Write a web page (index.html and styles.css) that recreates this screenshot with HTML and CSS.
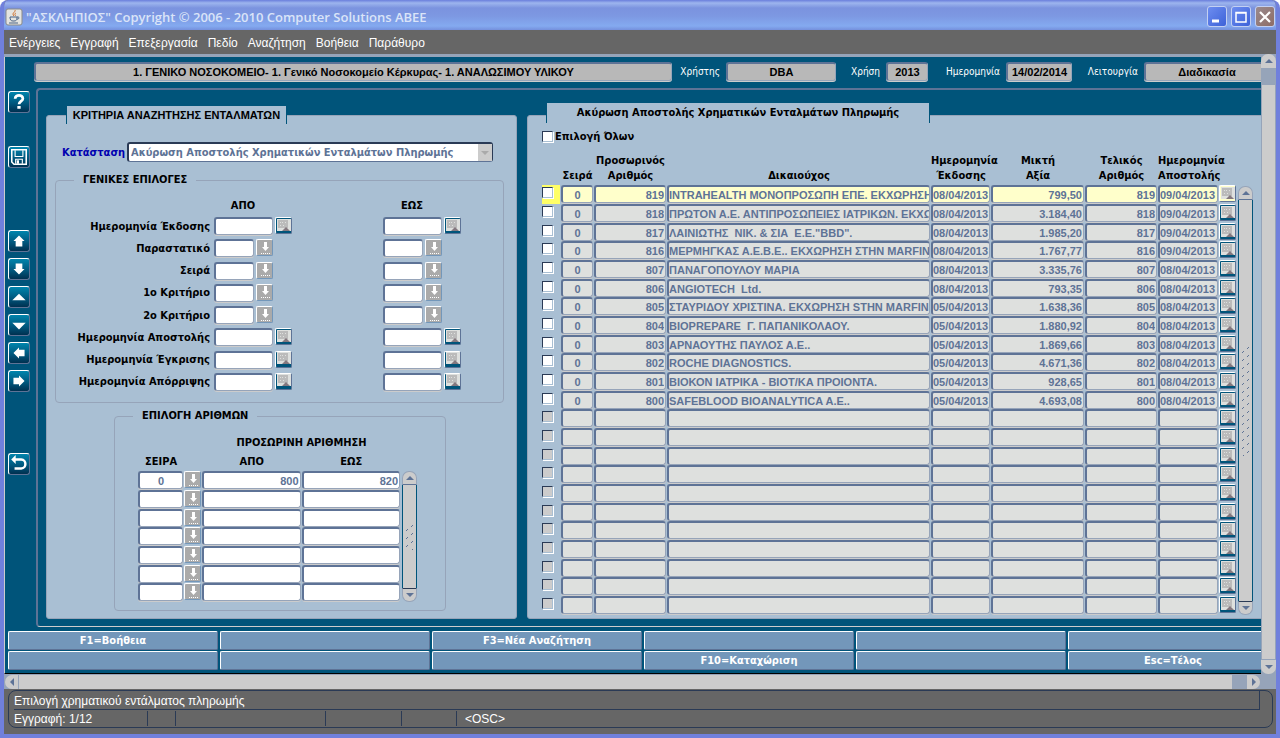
FILE: index.html
```html
<!DOCTYPE html>
<html lang="el">
<head>
  <meta charset="utf-8">
  <title>"ΑΣΚΛΗΠΙΟΣ" Copyright © 2006 - 2010 Computer Solutions ABEE</title>
  <link rel="stylesheet" href="styles.css">
</head>
<body>
  <!-- shared icons -->
  <svg class="defs" aria-hidden="true">
    <symbol id="i-cal" viewBox="0 0 14 14">
      <rect width="14" height="12" fill="#dee0de"/>
      <path d="M1 1h10v8H1z" fill="#bbb"/>
      <path d="M3 3.500h1M5 3.500h1M8 3.500h1M3 6.500h1M6 6.500h1" stroke="#dee0de"/>
      <path d="M5 12l4-4 4 4z" fill="#84787f"/>
    </symbol>
    <symbol id="i-lov" viewBox="0 0 14 14">
      <path d="M6 1h3v5h2L7.500 10 4 6h2z" fill="#fff"/>
      <path d="M3 12.500h9" stroke="#fff" stroke-dasharray="1 1"/>
    </symbol>
    <symbol id="i-up" viewBox="0 0 8 4"><path d="M4 0l4 4H0z" fill="#5e7396"/></symbol>
    <symbol id="i-down" viewBox="0 0 8 4"><path d="M0 0h8L4 4z" fill="#5e7396"/></symbol>
    <pattern id="ticks" width="10" height="8" patternUnits="userSpaceOnUse">
      <path d="M1 7l2-2M6 3l2-2" stroke="#5e7396"/>
    </pattern>
  </svg>

  <header class="titlebar">
    <svg class="java" viewBox="0 0 16 16">
      <rect x="0" y="0" width="16" height="16" rx="2" fill="#e4e4e0" stroke="#8b8b88"/>
      <path d="M9 1c1 2-4 3-1 6M10 4c-2 1-1 2 0 3" stroke="#d0702c" fill="none"/>
      <path d="M4 8h7v1c0 2-1 3-3 3H7c-2 0-3-1-3-4zM11 8c3-1 2 3 0 2M3 14h9" stroke="#4a6384" fill="none"/>
    </svg>
    <h1>"ΑΣΚΛΗΠΙΟΣ" Copyright © 2006 - 2010 Computer Solutions ABEE</h1>
    <button class="win" aria-label="Minimize"><svg viewBox="0 0 18 18"><path d="M4 13h7" stroke="#fff" stroke-width="3"/></svg></button>
    <button class="win" aria-label="Maximize"><svg viewBox="0 0 18 18"><path d="M4 4.500h10V14H4zM4 5h10" stroke="#fff" stroke-width="1.500" fill="none"/></svg></button>
    <button class="win close" aria-label="Close"><svg viewBox="0 0 18 18"><path d="M4 4l10 10M14 4L4 14" stroke="#fff" stroke-width="2.200"/></svg></button>
  </header>

  <nav class="menubar">
    <a href="#">Ενέργειες</a>
    <a href="#">Εγγραφή</a>
    <a href="#">Επεξεργασία</a>
    <a href="#">Πεδίο</a>
    <a href="#">Αναζήτηση</a>
    <a href="#">Βοήθεια</a>
    <a href="#">Παράθυρο</a>
  </nav>

  <div class="viewport">
    <main class="workspace">
      <div class="canvas">
        <div class="infobar">
          <input class="field grow" aria-label="Μονάδα" readonly value="1. ΓΕΝΙΚΟ ΝΟΣΟΚΟΜΕΙΟ- 1. Γενικό Νοσοκομείο Κέρκυρας- 1. ΑΝΑΛΩΣΙΜΟΥ ΥΛΙΚΟΥ">
          <label class="l-user" for="user">Χρήστης</label>
          <input class="field w-user" id="user" readonly value="DBA">
          <label class="l-year" for="year">Χρήση</label>
          <input class="field w-year" id="year" readonly value="2013">
          <label class="l-date" for="date">Ημερομηνία</label>
          <input class="field w-date" id="date" readonly value="14/02/2014">
          <label class="l-mode" for="mode">Λειτουργία</label>
          <input class="field w-mode" id="mode" readonly value="Διαδικασία">
        </div>

        <div class="work">
          <div class="toolbar">
            <button aria-label="Βοήθεια"><svg viewBox="0 0 18 18"><path d="M5.500 6c0-4 7-4 7 0 0 2-3.500 2.500-3.500 5" stroke="#fff" stroke-width="2.400" fill="none"/><path d="M7.500 12.500h3v2.500h-3z" fill="#fff"/></svg></button>
            <button class="save" aria-label="Αποθήκευση"><svg viewBox="0 0 18 18"><path d="M2.500 2.500h13v13h-11l-2-2z" stroke="#fff" fill="none" stroke-width="1.400"/><path d="M5.500 3v5.500h7V3M6 15v-4h6v4" stroke="#fff" fill="none"/><path d="M7 12h2v3H7z" fill="#fff"/></svg></button>
            <button class="first" aria-label="Προηγούμενη εγγραφή"><svg viewBox="0 0 18 18"><path d="M9 4l5 5h-2v5H6V9H4z" fill="#fff"/></svg></button>
            <button aria-label="Επόμενη εγγραφή"><svg viewBox="0 0 18 18"><path d="M9 14l5-5h-2V4H6v5H4z" fill="#fff"/></svg></button>
            <button aria-label="Προηγούμενη σελίδα"><svg viewBox="0 0 18 18"><path d="M9 6l6 6H3z" fill="#fff"/></svg></button>
            <button aria-label="Επόμενη σελίδα"><svg viewBox="0 0 18 18"><path d="M9 13L3 7h12z" fill="#fff"/></svg></button>
            <button aria-label="Αριστερά"><svg viewBox="0 0 18 18"><path d="M4 9l5-5v2h5v6H9v2z" fill="#fff"/></svg></button>
            <button aria-label="Δεξιά"><svg viewBox="0 0 18 18"><path d="M14 9L9 4v2H4v6h5v2z" fill="#fff"/></svg></button>
            <button class="exit" aria-label="Έξοδος"><svg viewBox="0 0 18 18"><path d="M5 5h6c5 0 5 8 0 8H5" stroke="#fff" stroke-width="2.200" fill="none"/><path d="M2 5l4-4v8z" fill="#fff"/></svg></button>
          </div>

          <div class="frame">
            <section class="panel criteria">
              <h2 class="tab">ΚΡΙΤΗΡΙΑ ΑΝΑΖΗΤΗΣΗΣ ΕΝΤΑΛΜΑΤΩΝ</h2>
              <div class="status-row">
                <label for="status">Κατάσταση</label>
                <div class="select">
                  <select id="status" disabled>
                    <option>Ακύρωση Αποστολής Χρηματικών Ενταλμάτων Πληρωμής</option>
                  </select>
                  <span class="arrow"><svg viewBox="0 0 8 4"><path d="M0 0h8L4 4z" fill="#aaa"/></svg></span>
                </div>
              </div>

              <fieldset class="general">
                <legend>ΓΕΝΙΚΕΣ ΕΠΙΛΟΓΕΣ</legend>
                <div class="range-head"><b>ΑΠΟ</b><b>ΕΩΣ</b></div>
                <div class="ranges" id="ranges"></div>
              </fieldset>

              <fieldset class="numbers">
                <legend>ΕΠΙΛΟΓΗ ΑΡΙΘΜΩΝ</legend>
                <div class="with-scroll">
                  <table class="grid">
                    <colgroup><col class="n-ser"><col class="n-btn"><col class="n-num"><col class="n-num"></colgroup>
                    <thead>
                      <tr class="top"><th></th><th></th><th colspan="2">ΠΡΟΣΩΡΙΝΗ ΑΡΙΘΜΗΣΗ</th></tr>
                      <tr><th>ΣΕΙΡΑ</th><th></th><th>ΑΠΟ</th><th>ΕΩΣ</th></tr>
                    </thead>
                    <tbody id="numbers"></tbody>
                  </table>
                  <div class="vscroll">
                    <button aria-label="Πάνω"><svg><use href="#i-up"/></svg></button>
                    <span class="thumb"><svg class="ticks"><rect width="100%" height="100%" fill="url(#ticks)"/></svg></span>
                    <button class="end" aria-label="Κάτω"><svg><use href="#i-down"/></svg></button>
                  </div>
                </div>
              </fieldset>
            </section>

            <section class="panel results">
              <h2 class="tab">Ακύρωση Αποστολής Χρηματικών Ενταλμάτων Πληρωμής</h2>
              <label class="all"><input type="checkbox">Επιλογή Όλων</label>
              <div class="with-scroll">
                <table class="grid">
                  <colgroup><col class="c-chk"><col class="c-ser"><col class="c-num"><col><col class="c-date"><col class="c-amt"><col class="c-num"><col class="c-sent"><col class="c-btn"></colgroup>
                  <thead>
                    <tr>
                      <th></th><th>Σειρά</th><th>Προσωρινός<br>Αριθμός</th><th>Δικαιούχος</th>
                      <th>Ημερομηνία<br>Έκδοσης</th><th>Μικτή<br>Αξία</th><th>Τελικός<br>Αριθμός</th><th>Ημερομηνία<br>Αποστολής</th><th></th>
                    </tr>
                  </thead>
                  <tbody id="orders"></tbody>
                </table>
                <div class="vscroll">
                  <button aria-label="Πάνω"><svg><use href="#i-up"/></svg></button>
                  <span class="thumb"><svg class="ticks"><rect width="100%" height="100%" fill="url(#ticks)"/></svg></span>
                  <button class="end" aria-label="Κάτω"><svg><use href="#i-down"/></svg></button>
                </div>
              </div>
            </section>
          </div>
        </div>

        <div class="keys">
          <button>F1=Βοήθεια</button><button></button><button>F3=Νέα Αναζήτηση</button><button></button><button></button><button></button>
          <button></button><button></button><button></button><button>F10=Καταχώριση</button><button></button><button>Esc=Τέλος</button>
        </div>
      </div>
    </main>

    <div class="page-v">
      <button aria-label="Πάνω"><svg><use href="#i-up"/></svg></button>
      <span></span>
      <button class="end" aria-label="Κάτω"><svg><use href="#i-down"/></svg></button>
    </div>
    <div class="page-h">
      <button aria-label="Αριστερά"><svg viewBox="0 0 4 8"><path d="M4 0v8L0 4z" fill="#5e7396"/></svg></button>
      <span></span>
      <button class="end" aria-label="Δεξιά"><svg viewBox="0 0 4 8"><path d="M0 0l4 4-4 4z" fill="#5e7396"/></svg></button>
    </div>
  </div>

  <footer class="console">
    <div class="box">
      <div class="message">Επιλογή χρηματικού εντάλματος πληρωμής</div>
      <div class="cells">
        <span class="s1">Εγγραφή: 1/12</span><span class="s2"></span><span class="s3"></span><span class="s4"></span><span class="s5"></span><span class="osc">&lt;OSC&gt;</span>
      </div>
    </div>
  </footer>

  <script>
    var ranges = [
      ["Ημερομηνία Έκδοσης", "cal"],
      ["Παραστατικό", "lov"],
      ["Σειρά", "lov"],
      ["1ο Κριτήριο", "lov"],
      ["2ο Κριτήριο", "lov"],
      ["Ημερομηνία Αποστολής", "cal"],
      ["Ημερομηνία Έγκρισης", "cal"],
      ["Ημερομηνία Απόρριψης", "cal"]
    ];
    var orders = [
      ["0", "819", "INTRAHEALTH ΜΟΝΟΠΡΟΣΩΠΗ ΕΠΕ. ΕΚΧΩΡΗΣΗ ΣΤΗΝ", "08/04/2013", "799,50", "819", "09/04/2013"],
      ["0", "818", "ΠΡΩΤΟΝ Α.Ε. ΑΝΤΙΠΡΟΣΩΠΕΙΕΣ ΙΑΤΡΙΚΩΝ. ΕΚΧΩΡΗΣΗ", "08/04/2013", "3.184,40", "818", "09/04/2013"],
      ["0", "817", "ΛΑΙΝΙΩΤΗΣ  ΝΙΚ. & ΣΙΑ  Ε.Ε.\"BBD\".", "08/04/2013", "1.985,20", "817", "09/04/2013"],
      ["0", "816", "ΜΕΡΜΗΓΚΑΣ Α.Ε.Β.Ε.. ΕΚΧΩΡΗΣΗ ΣΤΗΝ MARFIN E", "08/04/2013", "1.767,77", "816", "09/04/2013"],
      ["0", "807", "ΠΑΝΑΓΟΠΟΥΛΟΥ ΜΑΡΙΑ", "08/04/2013", "3.335,76", "807", "08/04/2013"],
      ["0", "806", "ANGIOTECH  Ltd.", "08/04/2013", "793,35", "806", "08/04/2013"],
      ["0", "805", "ΣΤΑΥΡΙΔΟΥ ΧΡΙΣΤΙΝΑ. ΕΚΧΩΡΗΣΗ STHN MARFIN E", "05/04/2013", "1.638,36", "805", "08/04/2013"],
      ["0", "804", "BIOPREPARE  Γ. ΠΑΠΑΝΙΚΟΛΑΟΥ.", "05/04/2013", "1.880,92", "804", "08/04/2013"],
      ["0", "803", "ΑΡΝΑΟΥΤΗΣ ΠΑΥΛΟΣ Α.Ε..", "05/04/2013", "1.869,66", "803", "08/04/2013"],
      ["0", "802", "ROCHE DIAGNOSTICS.", "05/04/2013", "4.671,36", "802", "08/04/2013"],
      ["0", "801", "ΒΙΟΚΟΝ ΙΑΤΡΙΚΑ - ΒΙΟΤ/ΚΑ ΠΡΟΙΟΝΤΑ.", "05/04/2013", "928,65", "801", "08/04/2013"],
      ["0", "800", "SAFEBLOOD BIOANALYTICA A.E..", "05/04/2013", "4.693,08", "800", "08/04/2013"]
    ];
    var columns = ["Σειρά", "Προσωρινός Αριθμός", "Δικαιούχος", "Ημερομηνία Έκδοσης", "Μικτή Αξία", "Τελικός Αριθμός", "Ημερομηνία Αποστολής"];
    var aligns = ["center", "right", "left", "left", "right", "right", "left"];

    function iconButton(kind) {
      var name = kind == "cal" ? "Ημερολόγιο" : "Λίστα τιμών";
      return '<button class="pick ' + kind + '" aria-label="' + name + '"><svg><use href="#i-' + kind + '"/></svg></button>';
    }
    function cell(value, align, label) {
      return '<td><input class="field ' + align + '" aria-label="' + label + '" value="' + value.replace(/&/g, "&amp;").replace(/"/g, "&quot;") + '"></td>';
    }

    var html = "";
    for (var i = 0; i < ranges.length; i++) {
      var kind = ranges[i][1];
      html += '<label for="from' + i + '">' + ranges[i][0] + '</label>' +
        '<div class="range"><input class="field ' + kind + '" id="from' + i + '">' + iconButton(kind) + '</div>' +
        '<div class="range"><input class="field ' + kind + '" aria-label="' + ranges[i][0] + ' έως">' + iconButton(kind) + '</div>';
    }
    document.getElementById("ranges").innerHTML = html;

    html = "";
    for (var i = 0; i < 7; i++) {
      html += '<tr>' + cell(i == 0 ? "0" : "", "center", "Σειρά") + '<td>' + iconButton("lov") + '</td>' +
        cell(i == 0 ? "800" : "", "right", "Από") + cell(i == 0 ? "820" : "", "right", "Έως") + '</tr>';
    }
    document.getElementById("numbers").innerHTML = html;

    html = "";
    for (var i = 0; i < 23; i++) {
      var row = orders[i];
      html += '<tr class="' + (i == 0 ? "current" : "") + '"><td class="chk"><input type="checkbox" aria-label="Επιλογή"' + (row ? "" : " disabled") + '></td>';
      for (var j = 0; j < columns.length; j++) {
        html += cell(row ? row[j] : "", aligns[j], columns[j]);
      }
      html += '<td>' + iconButton("cal") + '</td></tr>';
    }
    document.getElementById("orders").innerHTML = html;
  </script>
</body>
</html>
```
FILE: styles.css
```css
* {
  box-sizing: border-box;
}

html {
  background: #fff;
}

body {
  margin: 0;
  min-height: 100vh;
  display: flex;
  flex-direction: column;
  border: 4px solid #7080dc;
  border-top: 0;
  border-radius: 8px 8px 0 0;
  background: #666;
  font-family: "DejaVu Sans Condensed", "Noto Sans", sans-serif;
  font-size: 11px;
  overflow: hidden;
}

button, input, select {
  font: inherit;
  margin: 0;
  padding: 0;
}

button {
  display: flex;
  align-items: center;
  justify-content: center;
}

.defs {
  position: absolute;
  width: 0;
  height: 0;
}

/* title bar and menu */
.titlebar {
  display: flex;
  align-items: center;
  gap: 4px;
  height: 30px;
  margin: 0 -4px;
  padding: 3px 5px 0 6px;
  border-radius: 8px 8px 0 0;
  background: linear-gradient(#6a7edc 0, #9db5ee 3px, #7b93df 8px, #7d98e2 16px, #84aaf0 26px, #7590dc 30px);
}

.titlebar h1 {
  flex: 1;
  margin: 0;
  font: 600 13px "Open Sans", sans-serif;
  color: #dae4f8;
}

.java {
  width: 16px;
  height: 16px;
  overflow: visible;
}

.win {
  width: 20px;
  height: 21px;
  border: 1px solid #c3d0f2;
  border-radius: 3px;
  background: linear-gradient(135deg, #6d8df0, #3d62d8);
}

.win svg {
  width: 18px;
  height: 18px;
}

.close {
  background: linear-gradient(135deg, #9a8a8e, #8e6d66);
}

.menubar {
  display: flex;
  gap: 10px;
  height: 24px;
  padding: 1px 5px 0;
  align-items: center;
  background: #666;
}

.menubar a {
  color: #fff;
  font: 12px "Liberation Sans", sans-serif;
  text-decoration: none;
}

/* scrolled work area */
.viewport {
  flex: 1;
  display: grid;
  grid-template-columns: minmax(0, 1fr) 15px;
  grid-template-rows: 1fr 15px;
  background: #96a4b9;
}

.workspace {
  overflow: hidden;
  margin-top: 3px;
  border-left: 1px solid #ccc;
  border-bottom: 1px solid #000;
  background: #00547a;
}

.canvas {
  display: flex;
  flex-direction: column;
  width: calc(100% + 20px);
  height: 100%;
  padding-bottom: 3px;
}

.infobar {
  display: flex;
  align-items: center;
  padding: 5px 12px 7px 29px;
}

.infobar label {
  color: #fff;
  font-size: 10px;
  text-align: right;
  padding-right: 6px;
}

.infobar .field {
  height: 19px;
  background: #b8b8b8;
  color: #000;
  text-align: center;
}

.infobar .grow { flex: 1; }
.l-user { width: 54px; }
.l-year { width: 50px; }
.l-date { width: 78px; }
.l-mode { width: 72px; }
.infobar .w-user { width: 110px; }
.infobar .w-year { width: 42px; }
.infobar .w-date { width: 66px; }
.infobar .w-mode { width: 125px; }

.field {
  width: 100%;
  height: 18px;
  padding: 0;
  border: solid #5e7396;
  border-width: 2px 1px 1px 2px;
  border-right-color: #96a4b9;
  border-bottom-color: #96a4b9;
  border-radius: 3px;
  box-shadow: 0 1px #ccc;
  background: #fff;
  color: #5e7396;
  font-family: "Liberation Sans", sans-serif;
  font-weight: bold;
  outline: none;
}

.field.center { text-align: center; }
.field.right { text-align: right; padding-right: 1px; }

.work {
  flex: 1;
  display: flex;
}

.toolbar {
  display: flex;
  flex-direction: column;
  gap: 6px;
  width: 31px;
  padding: 3px 6px 0 3px;
}

.toolbar button {
  width: 22px;
  height: 22px;
  border: 1px solid #fff;
  border-right-color: #5e7396;
  border-bottom-color: #5e7396;
  border-radius: 3px;
  background: linear-gradient(#0085ad, #00547a 60%, #003050);
}

.toolbar svg {
  width: 20px;
  height: 20px;
}

.toolbar .save { margin-top: 27px; }
.toolbar .first { margin-top: 56px; }
.toolbar .exit { margin-top: 55px; }

.frame {
  flex: 1;
  min-width: 0;
  display: flex;
  gap: 10px;
  padding: 25px 0 7px 8px;
  border: 2px solid #5e7396;
  border-right: 0;
  border-bottom: 1px solid #ccc;
  border-radius: 4px 0 0 4px;
}

.panel {
  border: 1px solid #96a4b9;
  border-radius: 3px;
  background: #a9bfd3;
}

.criteria {
  width: 471px;
  padding: 0 12px 0 8px;
}

.results {
  flex: 1;
  min-width: 0;
  padding: 0 27px 0 14px;
}

.tab {
  width: 221px;
  margin: -10px 0 0 11px;
  border: solid #00547a;
  border-width: 0 1px;
  background: #a9bfd3;
  font-family: "Liberation Sans", sans-serif;
  font-size: 11px;
  line-height: 18px;
  text-align: center;
}

.results .tab {
  width: 384px;
  margin: -13px 0 0 4px;
  font-family: inherit;
  line-height: 20px;
}

.status-row {
  display: flex;
  align-items: center;
  gap: 3px;
  margin-top: 18px;
  padding-left: 7px;
}

.status-row label {
  width: 62px;
  color: #0000b0;
  font-weight: bold;
}

.select {
  position: relative;
  width: 366px;
}

.select select {
  appearance: none;
  width: 100%;
  height: 20px;
  padding-left: 2px;
  border: 1px solid #2a3a55;
  border-width: 2px 1px 1px 2px;
  border-bottom-color: #5e7396;
  border-radius: 3px;
  background: #fff;
  color: #5e7396;
  font-weight: bold;
  opacity: 1;
}

.select .arrow {
  position: absolute;
  top: 2px;
  right: 1px;
  bottom: 1px;
  width: 14px;
  display: flex;
  align-items: center;
  justify-content: center;
  background: #ccc;
}

.arrow svg {
  width: 8px;
  height: 4px;
}

fieldset {
  margin: 0;
  padding: 0;
  border: 1px solid #96a4b9;
  border-radius: 4px;
}

legend {
  padding: 0 9px;
  font-weight: bold;
  line-height: 14px;
}

.general {
  margin-top: 11px;
  padding-bottom: 9px;
}

.general legend { margin-left: 18px; }

.range-head {
  display: grid;
  grid-template-columns: 58px 58px;
  gap: 111px;
  margin: 12px 0 2px 158px;
  line-height: 14px;
  text-align: center;
}

.ranges {
  display: grid;
  grid-template-columns: 154px 165px 80px;
  grid-auto-rows: 1fr;
  column-gap: 4px;
  align-items: center;
  height: 178px;
}

.ranges label {
  font-weight: bold;
  text-align: right;
}

.range {
  display: flex;
  gap: 2px;
}

.range .cal.field { width: 59px; }
.range .lov.field { width: 40px; }

.pick {
  width: 17px;
  height: 17px;
  border: 1px solid #fff;
  border-right-color: #5e7396;
  border-bottom-color: #5e7396;
  border-radius: 2px;
  background: #00547a;
}

.pick.lov {
  background: #aaa;
  border-right-color: #7397ba;
  border-bottom-color: #7397ba;
}

.pick svg {
  width: 14px;
  height: 14px;
}

.numbers {
  width: 332px;
  margin: 6px 0 0 59px;
  padding: 0 28px 8px 23px;
}

.numbers legend { margin-left: -5px; }

.with-scroll {
  display: flex;
  align-items: flex-end;
  gap: 1px;
}

.grid {
  flex: 1;
  width: 100%;
  table-layout: fixed;
  border-collapse: collapse;
}

.grid th {
  padding: 0;
  line-height: 15px;
  vertical-align: bottom;
  white-space: nowrap;
}

.grid td {
  padding: 0 1px 0 0;
  vertical-align: top;
}

/* alternating heights keep the rows in step with the scrollbar */
.grid tbody tr { height: 19px; }
.grid tbody tr:nth-child(3n) { height: 18px; }

.n-ser { width: 46px; }
.n-btn { width: 18px; }
.numbers .grid thead tr { height: 19px; }
.numbers .grid th { padding-bottom: 2px; }
.numbers .grid { margin-top: 10px; }
.numbers .vscroll { height: 131px; }

.c-chk { width: 19px; }
.c-ser { width: 33px; }
.c-num { width: 73px; }
.c-date { width: 60px; }
.c-amt { width: 94px; }
.c-sent { width: 61px; }
.c-btn { width: 18px; }

.all {
  display: flex;
  align-items: center;
  gap: 1px;
  margin: 6px 0 8px;
  line-height: 15px;
  font-weight: bold;
}

.results .grid thead tr { height: 33px; }
.results .grid th { padding-bottom: 2px; }
.results td .field { background: #dee0de; }
.results .current .field { background: #ffffcb; }
.results .vscroll { height: 429px; }
.results .current .pick { background: #ffffcb; }
.current .chk { background: #ffff66 content-box; }

input[type="checkbox"] {
  appearance: none;
  display: block;
  width: 11px;
  height: 11px;
  border: 1px solid #2a3a55;
  border-right-color: #a9bfd3;
  border-bottom-color: #a9bfd3;
  box-shadow: 1px 1px #fff;
  background: #fff;
}

.all input[type="checkbox"] {
  margin-right: 1px;
}

td input[type="checkbox"] {
  margin-top: 2px;
}

input[type="checkbox"]:disabled {
  background: #ccc;
}

/* scrollbars */
.vscroll {
  display: flex;
  flex-direction: column;
  width: 15px;
}

.vscroll button {
  height: 14px;
  border: 1px solid #96a4b9;
  border-bottom-color: #5e7396;
  border-radius: 7px 7px 0 0;
  background: #ccc;
}

.vscroll .end {
  border-color: #2a3a55 #96a4b9 #96a4b9;
  border-radius: 0 0 7px 7px;
}

.vscroll svg, .page-v svg {
  width: 8px;
  height: 4px;
}

.thumb {
  flex: 1;
  display: flex;
  align-items: center;
  justify-content: center;
  border: solid #00547a;
  border-width: 0 1px;
  background: #ccc;
}

.thumb .ticks {
  width: 10px;
  height: 26px;
}

.results .thumb .ticks { height: 110px; }

.page-v {
  display: flex;
  flex-direction: column;
}

.page-v button, .page-h button {
  border: 0;
  background: #ccc;
}

.page-v button {
  height: 14px;
  border-radius: 7px 7px 0 0;
}

.page-v .end {
  border-radius: 0 0 7px 7px;
}

.page-v span {
  flex: 1;
  margin: 17px 1px 1px;
  background: #ccc;
}

.page-h {
  grid-column: 1 / 3;
  display: flex;
  padding: 1px 16px 0 1px;
}

.page-h button {
  width: 13px;
  border-radius: 7px 0 0 7px;
}

.page-h .end {
  border-radius: 0 7px 7px 0;
}

.page-h svg {
  width: 4px;
  height: 8px;
}

.page-h span {
  flex: 1;
  margin: 0 15px 0 1px;
  background: #ccc;
}

/* function keys */
.keys {
  display: grid;
  grid-template-columns: repeat(6, 1fr);
  grid-auto-rows: 19px;
  gap: 1px 2px;
  padding: 4px 3px 0;
}

.keys button {
  border: 1px solid #fff;
  border-right-color: #5e7396;
  border-bottom-color: #5e7396;
  border-radius: 2px;
  background: #7397ba;
  color: #fff;
  font-weight: bold;
}

/* status lines */
.console {
  padding: 1px 3px 6px 4px;
  background: #666;
  color: #fff;
  font: 12px "Liberation Sans", sans-serif;
}

.box {
  border: 1px solid #2a3a55;
  border-radius: 8px;
  padding: 0 6px 0 5px;
}

.message {
  height: 19px;
  margin-right: 6px;
  border-bottom: 1px solid #2a3a55;
  line-height: 20px;
  box-shadow: inset -1px 0 #2a3a55;
}

.cells {
  display: flex;
  height: 17px;
  line-height: 17px;
}

.cells span {
  border-right: 1px solid #2a3a55;
  margin-top: 1px;
  height: 15px;
  line-height: 16px;
}

.s1 { width: 134px; }
.s2 { width: 28px; }
.s3 { width: 150px; }
.s4 { width: 76px; }
.s5 { width: 55px; }

.cells .osc {
  border: 0;
  padding-left: 8px;
}
```
